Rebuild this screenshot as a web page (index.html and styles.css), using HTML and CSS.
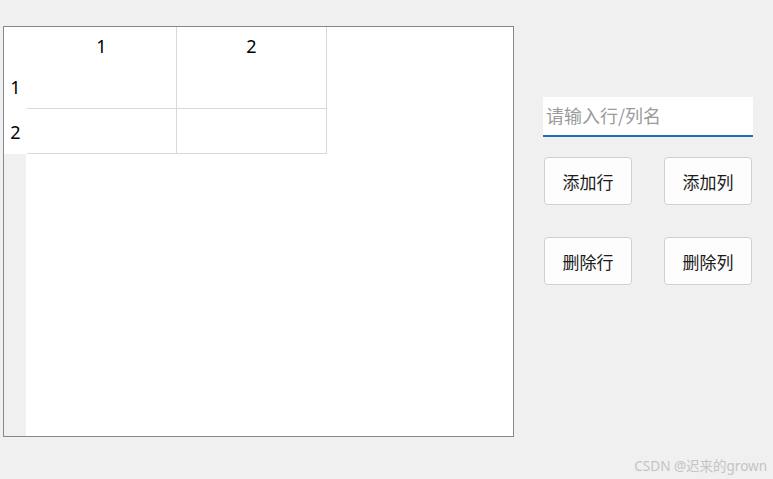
FILE: index.html
```html
<!DOCTYPE html>
<html lang="zh">
<head>
<meta charset="utf-8">
<link rel="stylesheet" href="styles.css">
</head>
<body>
<div class="window">
  <div class="table-widget">
    <div class="vheader">
      <div class="corner"></div>
      <div class="vlabel">1</div>
      <div class="vlabel">2</div>
      <div class="vrest"></div>
    </div>
    <div class="grid">
      <div class="hcell">1</div>
      <div class="hcell">2</div>
      <div class="cell"></div>
      <div class="cell"></div>
      <div class="cell"></div>
      <div class="cell"></div>
    </div>
  </div>
  <div class="panel">
    <input class="name-input" type="text" placeholder="请输入行/列名">
    <div class="buttons">
      <button class="btn">添加行</button>
      <button class="btn">添加列</button>
      <button class="btn">删除行</button>
      <button class="btn">删除列</button>
    </div>
  </div>
</div>
<div class="watermark">CSDN @迟来的grown</div>
</body>
</html>
```
FILE: styles.css
```css
html, body {
  margin: 0;
  padding: 0;
  background: #f0f0f0;
  width: 773px;
  height: 479px;
  overflow: hidden;
  font-family: "Noto Sans", "Noto Sans CJK SC", sans-serif;
}
.window {
  display: flex;
  align-items: flex-start;
  padding: 26px 0 0 3px;
}
.table-widget {
  width: 509px;
  height: 409px;
  border: 1px solid #828790;
  background: #ffffff;
  display: flex;
}
.vheader {
  width: 22px;
  display: flex;
  flex-direction: column;
}
.corner {
  height: 37px;
  background: #ffffff;
}
.vlabel {
  height: 45px;
  background: #ffffff;
  display: flex;
  align-items: center;
  justify-content: center;
  padding-left: 1px;
  font-size: 18px;
  color: #000;
}
.vrest {
  flex: 1;
  background: #f0f0f0;
}
.grid {
  display: grid;
  grid-template-columns: 150px 150px;
  grid-template-rows: 37px 45px 45px;
  align-self: flex-start;
  border-left: 1px solid transparent;
}
.hcell {
  border-right: 1px solid #d8d8d8;
  display: flex;
  align-items: center;
  justify-content: center;
  font-size: 18px;
  color: #000;
  padding-top: 1px;
  box-sizing: border-box;
}
.cell {
  border-right: 1px solid #d8d8d8;
  border-bottom: 1px solid #d8d8d8;
}
.panel {
  margin-left: 29px;
  margin-top: 71px;
  display: flex;
  flex-direction: column;
}
.name-input {
  width: 210px;
  height: 40px;
  box-sizing: border-box;
  border: none;
  border-bottom: 2px solid #1e6fba;
  background: #ffffff;
  padding: 0 3px 2px 3px;
  font-family: "Noto Sans CJK SC", sans-serif;
  font-size: 18px;
  outline: none;
}
.name-input::placeholder {
  color: #9a9a9a;
}
.buttons {
  margin-top: 20px;
  margin-left: 1px;
  display: grid;
  grid-template-columns: 88px 88px;
  grid-auto-rows: 48px;
  column-gap: 32px;
  row-gap: 32px;
}
.btn {
  background: #fdfdfd;
  border: 1px solid #d0d0d0;
  border-radius: 4px;
  font-family: "Noto Sans CJK SC", sans-serif;
  font-size: 17px;
  color: #1a1a1a;
  padding: 0;
}
.watermark {
  position: absolute;
  right: 6px;
  top: 455px;
  font-family: "Noto Sans", "Noto Sans CJK SC", sans-serif;
  font-size: 13.5px;
  color: #c4c4c4;
}
```
